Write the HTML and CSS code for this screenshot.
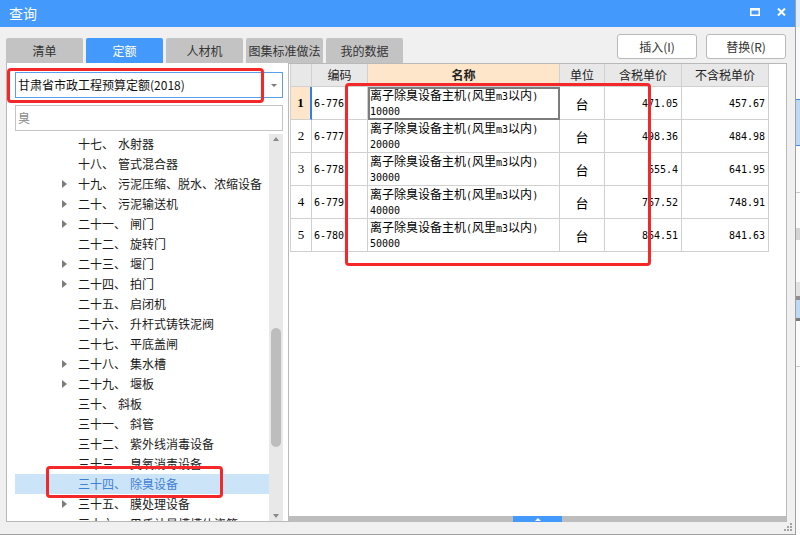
FILE: index.html
```html
<!DOCTYPE html>
<html lang="zh-CN">
<head>
<meta charset="utf-8">
<title>查询</title>
<link rel="stylesheet" href="styles.css">
</head>
<body>
<div class="screen">
  <div class="dialog">
    <div class="titlebar">
      <span class="title">查询</span>
      <div class="winbtns">
        <svg width="10" height="8" viewBox="0 0 10 8"><rect x="0.75" y="0.75" width="8.5" height="6.5" fill="none" stroke="#fff" stroke-width="1.5"/><rect x="0" y="0" width="10" height="2.5" fill="#fff"/></svg>
        <svg width="9" height="8" viewBox="0 0 9 8"><path d="M1 0.5 L8 7.5 M8 0.5 L1 7.5" stroke="#fff" stroke-width="2" fill="none"/></svg>
      </div>
    </div>

    <div class="toolbar">
      <div class="tabs">
        <div class="tab">清单</div>
        <div class="tab active">定额</div>
        <div class="tab">人材机</div>
        <div class="tab">图集标准做法</div>
        <div class="tab">我的数据</div>
      </div>
      <div class="actions">
        <button class="btn">插入(I)</button>
        <button class="btn">替换(R)</button>
      </div>
    </div>

    <div class="main">
      <div class="left">
        <div class="combo"><span class="combo-text">甘肃省市政工程预算定额(2018)</span><span class="caret"></span></div>
        <div class="search">臭</div>
        <div class="tree">
          <div class="tree-list">
            <div class="node"><span class="exp"></span><span class="no">十七、</span>水射器</div>
            <div class="node"><span class="exp"></span><span class="no">十八、</span>管式混合器</div>
            <div class="node"><span class="exp has"></span><span class="no">十九、</span>污泥压缩、脱水、浓缩设备</div>
            <div class="node"><span class="exp has"></span><span class="no">二十、</span>污泥输送机</div>
            <div class="node"><span class="exp has"></span><span class="no">二十一、</span>闸门</div>
            <div class="node"><span class="exp"></span><span class="no">二十二、</span>旋转门</div>
            <div class="node"><span class="exp has"></span><span class="no">二十三、</span>堰门</div>
            <div class="node"><span class="exp has"></span><span class="no">二十四、</span>拍门</div>
            <div class="node"><span class="exp"></span><span class="no">二十五、</span>启闭机</div>
            <div class="node"><span class="exp"></span><span class="no">二十六、</span>升杆式铸铁泥阀</div>
            <div class="node"><span class="exp"></span><span class="no">二十七、</span>平底盖闸</div>
            <div class="node"><span class="exp has"></span><span class="no">二十八、</span>集水槽</div>
            <div class="node"><span class="exp has"></span><span class="no">二十九、</span>堰板</div>
            <div class="node"><span class="exp"></span><span class="no">三十、</span>斜板</div>
            <div class="node"><span class="exp"></span><span class="no">三十一、</span>斜管</div>
            <div class="node"><span class="exp"></span><span class="no">三十二、</span>紫外线消毒设备</div>
            <div class="node"><span class="exp"></span><span class="no">三十三、</span>臭氧消毒设备</div>
            <div class="node sel"><span class="exp"></span><span class="no">三十四、</span>除臭设备</div>
            <div class="node"><span class="exp has"></span><span class="no">三十五、</span>膜处理设备</div>
            <div class="node"><span class="exp"></span><span class="no">三十六、</span>巴氏计量槽槽体浇筑</div>
          </div>
          <div class="vscroll">
            <span class="arr-up"></span>
            <div class="thumb"></div>
            <span class="arr-down"></span>
          </div>
        </div>
      </div>

      <div class="right">
        <div class="grid">
          <div class="c h"></div>
          <div class="c h">编码</div>
          <div class="c h hsel">名称</div>
          <div class="c h">单位</div>
          <div class="c h">含税单价</div>
          <div class="c h">不含税单价</div>

          <div class="c rn cur">1</div>
          <div class="c code">6-776</div>
          <div class="c name focus"><div>离子除臭设备主机<span class="m">(</span>风里<span class="m">m3</span>以内<span class="m">)</span><br><span class="m">10000</span></div></div>
          <div class="c unit">台</div>
          <div class="c num">471.05</div>
          <div class="c num">457.67</div>

          <div class="c rn">2</div>
          <div class="c code">6-777</div>
          <div class="c name"><div>离子除臭设备主机<span class="m">(</span>风里<span class="m">m3</span>以内<span class="m">)</span><br><span class="m">20000</span></div></div>
          <div class="c unit">台</div>
          <div class="c num">498.36</div>
          <div class="c num">484.98</div>

          <div class="c rn">3</div>
          <div class="c code">6-778</div>
          <div class="c name"><div>离子除臭设备主机<span class="m">(</span>风里<span class="m">m3</span>以内<span class="m">)</span><br><span class="m">30000</span></div></div>
          <div class="c unit">台</div>
          <div class="c num">655.4</div>
          <div class="c num">641.95</div>

          <div class="c rn">4</div>
          <div class="c code">6-779</div>
          <div class="c name"><div>离子除臭设备主机<span class="m">(</span>风里<span class="m">m3</span>以内<span class="m">)</span><br><span class="m">40000</span></div></div>
          <div class="c unit">台</div>
          <div class="c num">767.52</div>
          <div class="c num">748.91</div>

          <div class="c rn">5</div>
          <div class="c code">6-780</div>
          <div class="c name"><div>离子除臭设备主机<span class="m">(</span>风里<span class="m">m3</span>以内<span class="m">)</span><br><span class="m">50000</span></div></div>
          <div class="c unit">台</div>
          <div class="c num">864.51</div>
          <div class="c num">841.63</div>
        </div>
        <div class="fill"></div>
        <div class="hsplit"><div class="handle"><span class="tri"></span></div></div>
      </div>
    </div>

    <div class="footer">
      <svg class="grip" width="9" height="9" viewBox="0 0 9 9" fill="#a3a3a3">
        <rect x="6" y="0" width="2" height="2"/>
        <rect x="3" y="3" width="2" height="2"/><rect x="6" y="3" width="2" height="2"/>
        <rect x="0" y="6" width="2" height="2"/><rect x="3" y="6" width="2" height="2"/><rect x="6" y="6" width="2" height="2"/>
      </svg>
    </div>
  </div>

  <div class="backdrop">
    <div class="b b1"></div>
    <div class="b b2"></div>
    <div class="b b3"></div>
    <div class="b b4"></div>
    <div class="b b3"></div>
    <div class="b b5"></div>
    <div class="b b6"></div>
    <div class="b b7"></div>
    <div class="b b8"></div>
    <div class="b b9"></div>
    <div class="b b10"></div>
    <div class="b b11"></div>
    <div class="b b12"></div>
    <div class="b b13"></div>
    <div class="b b14"></div>
  </div>
</div>

<div class="mark mark-combo"></div>
<div class="mark mark-grid"></div>
<div class="mark mark-tree"></div>
</body>
</html>
```

FILE: styles.css
```css
* { box-sizing: border-box; }
html, body { margin: 0; padding: 0; }
body {
  width: 800px;
  height: 535px;
  overflow: hidden;
  position: relative;
  background: #fff;
  font-family: "Noto Sans CJK SC", "Liberation Sans", sans-serif;
  color: #1e1e1e;
}
.screen { display: flex; width: 800px; height: 535px; }

.dialog {
  width: 796px;
  height: 535px;
  flex: none;
  display: flex;
  flex-direction: column;
  background: #f0f0f0;
  border-right: 1px solid #a0a0a0;
  border-bottom: 1px solid #a0a0a0;
}

/* title bar */
.titlebar {
  height: 27px;
  flex: none;
  display: flex;
  align-items: center;
  padding: 0 9px 0 9px;
  background: #4499fd;
  color: #fff;
  font-size: 14px;
  line-height: 27px;
}
.title { margin-top: -1px; }
.winbtns { margin-left: auto; display: flex; align-items: center; gap: 17px; margin-top: -4px; }
.winbtns svg { display: block; }

/* toolbar */
.toolbar { height: 36px; flex: none; display: flex; padding: 0 9px 0 6px; }
.tabs { display: flex; gap: 3px; align-self: flex-end; }
.tab {
  width: 77px;
  height: 25px;
  background: #c3c3c3;
  color: #333;
  font-size: 12px;
  line-height: 25px;
  text-align: center;
  border-radius: 2px 2px 0 0;
  white-space: nowrap;
}
.tab.active { background: #4499fd; color: #fff; }
.actions { margin-left: auto; display: flex; gap: 9px; padding-top: 7px; }
.btn {
  width: 80px;
  height: 25px;
  padding: 0;
  background: #fff;
  border: 1px solid #b9b9b9;
  border-radius: 3px;
  font-family: "Noto Sans CJK SC", "Liberation Sans", sans-serif;
  font-size: 12px;
  line-height: 23px;
  color: #333;
}

/* main */
.main { height: 459px; flex: none; display: flex; padding-left: 6px; }

.left {
  width: 283px;
  height: 459px;
  flex: none;
  display: flex;
  flex-direction: column;
  background: #fff;
  border-left: 1px solid #b9b9b9;
  border-right: 1px solid #b9b9b9;
  border-bottom: 1px solid #b9b9b9;
  padding: 9px 5px 0 8px;
}
.combo {
  height: 26px;
  flex: none;
  display: flex;
  align-items: center;
  border: 1px solid #57a0ee;
  padding: 0 0 0 2px;
  font-size: 12px;
  line-height: 24px;
  color: #111;
}
.combo-text { flex: 1; white-space: nowrap; }
.caret {
  width: 0;
  height: 0;
  margin-right: 5px;
  border-top: 3px solid #7a7a7a;
  border-left: 3px solid transparent;
  border-right: 3px solid transparent;
}
.search {
  height: 26px;
  flex: none;
  margin-top: 7px;
  border: 1px solid #c4c4c4;
  padding-left: 2px;
  font-size: 12px;
  line-height: 24px;
  color: #8a8a8a;
}

.tree { flex: 1; margin-top: 3px; display: flex; overflow: hidden; min-height: 0; }
.tree-list { flex: 1; overflow: hidden; }
.node {
  height: 20px;
  display: flex;
  align-items: center;
  padding-left: 43px;
  font-size: 12px;
  line-height: 20px;
  white-space: nowrap;
  color: #1a1a1a;
}
.no { margin-right: 4px; }
.node.sel { background: #cce4f7; color: #3d80d8; }
.exp { width: 20px; flex: none; height: 20px; display: flex; align-items: center; }
.exp.has::before {
  content: "";
  display: block;
  width: 0;
  height: 0;
  margin-left: 4px;
  border-left: 5px solid #7d7d7d;
  border-top: 4px solid transparent;
  border-bottom: 4px solid transparent;
}

.vscroll {
  width: 14px;
  flex: none;
  background: #e8e8e8;
  display: flex;
  flex-direction: column;
  align-items: center;
}
.arr-up {
  margin-top: 3px;
  width: 0;
  height: 0;
  border-bottom: 4px solid #8a8a8a;
  border-left: 3.5px solid transparent;
  border-right: 3.5px solid transparent;
}
.thumb {
  margin-top: 187px;
  width: 10px;
  height: 119px;
  border-radius: 5px;
  background: #bdbdbd;
}
.arr-down {
  margin-top: auto;
  margin-bottom: 3px;
  width: 0;
  height: 0;
  border-top: 4px solid #8a8a8a;
  border-left: 3.5px solid transparent;
  border-right: 3.5px solid transparent;
}

/* right panel */
.right {
  width: 498px;
  height: 459px;
  flex: none;
  display: flex;
  flex-direction: column;
  background: #fff;
  border-top: 1px solid #b9b9b9;
  border-right: 1px solid #b9b9b9;
}
.grid {
  margin-left: 1px;
  width: 479px;
  display: grid;
  grid-template-columns: 21px 56px 192px 45px 77px 87px;
  grid-template-rows: 23px repeat(5, 33px);
  border-left: 1px solid #d0d0d0;
}
.c {
  display: flex;
  align-items: center;
  overflow: hidden;
  white-space: nowrap;
  border-right: 1px solid #d0d0d0;
  border-bottom: 1px solid #d0d0d0;
  color: #000;
}
.h {
  justify-content: center;
  background: #e8e8e8;
  font-size: 12px;
  line-height: 1;
  color: #222;
}
.h.hsel { background: #fde6c9; font-weight: bold; }
.rn {
  justify-content: center;
  font-family: "Liberation Serif", serif;
  font-size: 13px;
}
.rn.cur { background: #fde6c9; font-weight: bold; border-right: 2px solid #2f80ea; }
.code {
  padding-left: 2px;
  font-family: "DejaVu Sans Mono", monospace;
  font-size: 10px;
}
.name {
  padding-left: 2px;
  font-size: 12px;
  line-height: 13px;
}
.name.focus { outline: 2px solid #7c7c7c; outline-offset: -2px; }
.m { font-family: "DejaVu Sans Mono", monospace; font-size: 10px; }
.unit { justify-content: center; font-size: 13px; }
.num {
  justify-content: flex-end;
  padding-right: 3px;
  font-family: "DejaVu Sans Mono", monospace;
  font-size: 10px;
}
.fill { flex: 1; }
.hsplit {
  height: 6px;
  flex: none;
  background: #bdbdbd;
  display: flex;
  justify-content: center;
}
.handle {
  width: 49px;
  background: #4499fd;
  display: flex;
  justify-content: center;
  align-items: center;
}
.tri {
  width: 0;
  height: 0;
  border-bottom: 3px solid #fff;
  border-left: 3px solid transparent;
  border-right: 3px solid transparent;
}

.footer { flex: 1; display: flex; justify-content: flex-end; align-items: flex-start; padding-right: 2px; }
.grip { display: block; margin-top: 1px; }

/* background application strip */
.backdrop { width: 4px; flex: none; display: flex; flex-direction: column; background: #fbfbfb; }
.b { flex: none; }
.b1 { height: 27px; background: #e3edf9; }
.b2 { height: 72px; background: #f8fafd; }
.b3 { height: 1px; background: #3a8ae8; }
.b4 { height: 45px; background: #bcd9f7; }
.b5 { height: 46px; background: #fbfbfb; }
.b6 { height: 1px; background: #c8c8c8; }
.b7 { height: 35px; background: #fbfbfb; }
.b8 { height: 12px; background: #d4d4d4; }
.b9 { height: 42px; background: #fbfbfb; }
.b10 { height: 14px; background: #e2e2e2; }
.b11 { height: 4px; background: #909090; }
.b12 { height: 18px; background: #bcd9f7; }
.b13 { height: 3px; background: #7a7a7a; }
.b14 { height: 46px; background: #fbfbfb; border-bottom: 1px solid #c8c8c8; }

/* red annotation boxes */
.mark {
  position: absolute;
  border: 3px solid #f42828;
  border-radius: 4px;
  pointer-events: none;
}
.mark-combo { left: 7px; top: 68px; width: 257px; height: 35px; }
.mark-grid { left: 345px; top: 83px; width: 306px; height: 183px; }
.mark-tree { left: 46px; top: 466px; width: 177px; height: 32px; }
```
